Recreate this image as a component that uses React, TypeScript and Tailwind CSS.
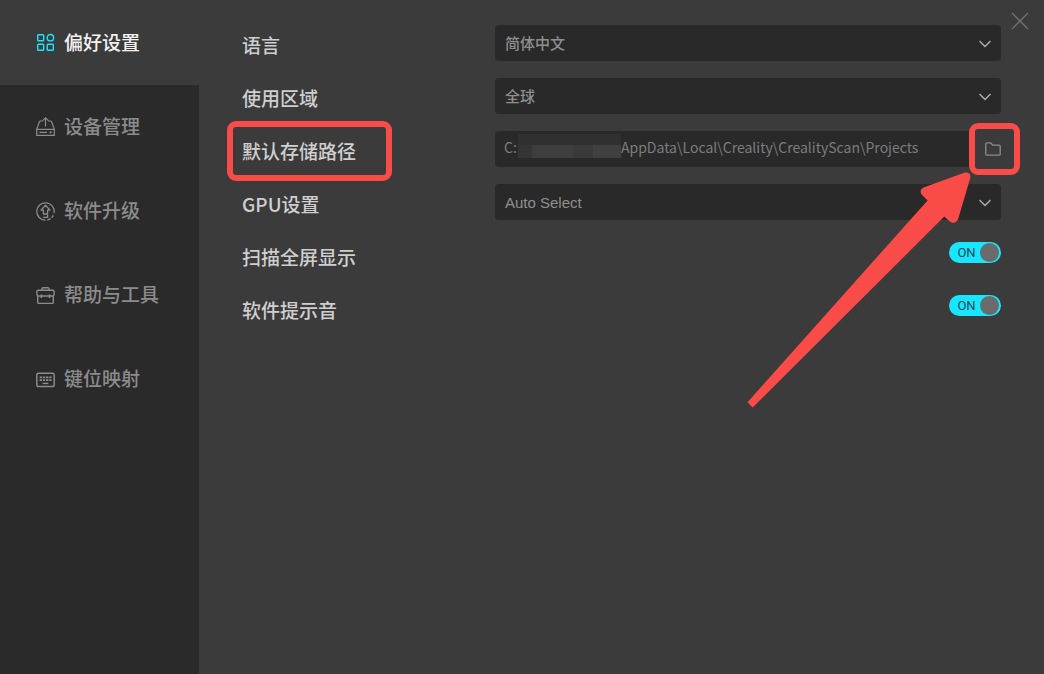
import { useState, type ReactNode } from 'react'
import { ChevronDown } from 'lucide-react'

const NAV_ITEMS = [
  { id: 'preferences', label: '偏好设置', icon: <GridIcon /> },
  { id: 'devices', label: '设备管理', icon: <DeviceIcon /> },
  { id: 'upgrade', label: '软件升级', icon: <UpgradeIcon /> },
  { id: 'help', label: '帮助与工具', icon: <ToolboxIcon /> },
  { id: 'keys', label: '键位映射', icon: <KeyboardIcon /> },
]

function GridIcon() {
  return (
    <svg width="19" height="19" viewBox="0 0 19 19" fill="none" stroke="currentColor" strokeWidth="1.4">
      <rect x="1.7" y="1.7" width="6" height="6" rx="0.8" />
      <circle cx="14.4" cy="4.7" r="3.2" />
      <rect x="1.7" y="11.3" width="6" height="6" rx="0.8" />
      <rect x="11.3" y="11.3" width="6" height="6" rx="0.8" />
    </svg>
  )
}

function DeviceIcon() {
  return (
    <svg width="19" height="19" viewBox="0 1 19 19" fill="none" stroke="currentColor" strokeWidth="1.2" overflow="visible">
      <path d="M7 4H4.6Q3.7 4 3.3 5L0.7 12.4V18.3H18.3V12.4L15.7 5Q15.3 4 14.4 4H12" />
      <path d="M0.7 12.4H18.3M9.5 9.5V1M6.6 3.6L9.5 0.8L12.4 3.6M3.5 15.4H11" />
      <circle cx="14.6" cy="15.4" r="1.1" fill="currentColor" stroke="none" />
    </svg>
  )
}

function UpgradeIcon() {
  return (
    <svg width="19" height="19" viewBox="0 0 19 19" fill="none" stroke="currentColor" strokeWidth="1.3">
      <path d="M18 11.2A8.7 8.7 0 1 0 9.5 18.2" />
      <path d="M11.4 18A8.7 8.7 0 0 0 17.2 13.4" strokeDasharray="3.5 1.4" />
      <path d="M9.5 3.2L14 8.1H11.6V12H7.4V8.1H5Z" strokeLinejoin="round" />
      <path d="M11.6 13V15.4H7.2" />
    </svg>
  )
}

function ToolboxIcon() {
  return (
    <svg width="19" height="19" viewBox="0 0 19 19" fill="none" stroke="currentColor" strokeWidth="1.4">
      <rect x="0.9" y="4.2" width="17.2" height="5.8" rx="1.4" />
      <path d="M1.7 10V16.4Q1.7 17.4 2.7 17.4H16.3Q17.3 17.4 17.3 16.4V10" />
      <path d="M6 4.2V2.8Q6 1.8 7 1.8H12Q13 1.8 13 2.8V4.2" />
      <path d="M5.4 8.4V12M13.6 8.4V12" strokeWidth="1.6" />
    </svg>
  )
}

function KeyboardIcon() {
  return (
    <svg width="19" height="19" viewBox="0 0 19 19" fill="none" stroke="currentColor">
      <rect x="0.8" y="3.2" width="17.4" height="13.4" rx="1.8" strokeWidth="1.5" />
      <path d="M3.6 7.3H15.6M3.6 10.2H15.6" strokeWidth="1.8" strokeDasharray="2.4 0.8" />
      <path d="M6.6 13.4H12.4" strokeWidth="1.4" />
    </svg>
  )
}

function FolderIcon() {
  return (
    <svg width="16" height="14" viewBox="0 0 16 14" fill="none" stroke="currentColor" strokeWidth="1.3" strokeLinejoin="round">
      <path d="M0.8 12V2Q0.8 0.8 2 0.8H5.3Q5.9 0.8 6.3 1.4L7.5 3.1H14Q15.2 3.1 15.2 4.3V12Q15.2 13.2 14 13.2H2Q0.8 13.2 0.8 12Z" />
    </svg>
  )
}

interface RowProps {
  id: string
  label: string
  marked?: boolean
  children: ReactNode
}

function Row({ id, label, marked, children }: RowProps) {
  return (
    <div className="grid grid-cols-[253px_1fr] h-9">
      <div className="flex items-center pt-1">
        <label htmlFor={id} className="relative text-[19px] leading-7 font-medium text-[#cfcfcf] font-['Noto_Sans_CJK_SC',sans-serif]">
          {label}
          {marked && (
            <span className="absolute -top-4 -bottom-4 -left-[15px] -right-9 rounded-[9px] border-6 border-[#f94b48] pointer-events-none" />
          )}
        </label>
      </div>
      {children}
    </div>
  )
}

function SelectField({ id, options }: { id: string; options: string[] }) {
  const [value, setValue] = useState(options[0])
  return (
    <div className="relative">
      <select
        id={id}
        value={value}
        onChange={e => setValue(e.target.value)}
        className="w-full h-full appearance-none rounded bg-[#292929] pl-[10px] pr-8 pt-0.5 text-[15px] font-medium text-[#8f8f8f] outline-none"
      >
        {options.map(o => (
          <option key={o}>{o}</option>
        ))}
      </select>
      <ChevronDown className="absolute right-[6px] top-[9px] size-5 text-[#a6a6a6] pointer-events-none" strokeWidth={2} />
    </div>
  )
}

function Toggle({ id }: { id: string }) {
  const [on, setOn] = useState(true)
  return (
    <div className="flex items-center justify-end pb-[5px]">
      <label className={`relative flex items-center w-[52px] h-[21px] rounded-full pl-1 pr-0.5 ${on ? 'bg-[#18e6ff]' : 'bg-[#555555] flex-row-reverse'}`}>
        <input id={id} type="checkbox" checked={on} onChange={e => setOn(e.target.checked)} className="sr-only" />
        <span className="flex-1 text-center text-[13px] leading-5 text-[#174a50] font-[Roboto,sans-serif]">{on ? 'ON' : 'OFF'}</span>
        <span className="size-[19px] rounded-full bg-[#6b6b6b]" />
      </label>
    </div>
  )
}

function App() {
  const [active, setActive] = useState('preferences')
  const [path, setPath] = useState('AppData\\Local\\Creality\\CrealityScan\\Projects')

  return (
    <div className="relative flex min-h-screen bg-[#3b3b3b] font-['Liberation_Sans','Noto_Sans_CJK_SC',sans-serif]">
      <nav className="w-[199px] shrink-0 bg-[#2a2a2a] font-['Noto_Sans_CJK_SC',sans-serif]">
        {NAV_ITEMS.map(item => (
          <button
            key={item.id}
            onClick={() => setActive(item.id)}
            className={`flex items-center gap-[9px] w-full pl-9 text-[19px] leading-7 font-medium ${
              item.id === active ? 'h-[85px] bg-[#3b3b3b] text-[#f2f2f2]' : 'h-[84px] text-[#8c8c8c]'
            }`}
          >
            <span className={item.id === active ? 'text-[#18e6ff]' : undefined}>{item.icon}</span>
            <span className="pb-0.5">{item.label}</span>
          </button>
        ))}
      </nav>

      <main className="flex-1 min-w-0 flex flex-col gap-[17px] pt-[25px] px-[43px]">
        <Row id="language" label="语言">
          <SelectField id="language" options={['简体中文', 'English']} />
        </Row>
        <Row id="region" label="使用区域">
          <SelectField id="region" options={['全球', '中国']} />
        </Row>
        <Row id="path" label="默认存储路径" marked>
          <div className="flex min-w-0">
            <div className="flex flex-1 min-w-0 h-full rounded-l bg-[#292929] pl-[9px] pt-[3px] text-[14px] leading-[26px] text-[#7d7d7d] font-['Noto_Sans_CJK_SC',sans-serif]">
              <span className="w-[14px]">C:</span>
              {/* masked user folder */}
              <span className="w-[103px] h-6 flex flex-col bg-[#303030]">
                <span className="h-[11px]" />
                <span className="flex flex-1">
                  <span className="w-[14px] bg-[#353535]" />
                  <span className="w-[41px] bg-[#3e3e3e]" />
                  <span className="w-[20px] bg-[#3a3a3a]" />
                  <span className="flex-1 bg-[#404040]" />
                </span>
              </span>
              <input
                id="path"
                value={path}
                onChange={e => setPath(e.target.value)}
                className="flex-1 min-w-0 h-[26px] bg-transparent outline-none"
              />
            </div>
            <button aria-label="选择文件夹" className="relative w-7 flex items-center justify-end text-[#8c8c8c]">
              <FolderIcon />
              <span className="absolute -top-2 -bottom-2 -left-1 -right-[19px] rounded-[9px] border-6 border-[#f94b48] pointer-events-none" />
            </button>
          </div>
        </Row>
        <Row id="gpu" label="GPU设置">
          <SelectField id="gpu" options={['Auto Select']} />
        </Row>
        <Row id="fullscreen" label="扫描全屏显示">
          <Toggle id="fullscreen" />
        </Row>
        <Row id="sound" label="软件提示音">
          <Toggle id="sound" />
        </Row>
      </main>

      <button aria-label="关闭" className="absolute top-3 right-[15px] text-[#707070]">
        <svg width="18" height="18" viewBox="0 0 18 18" fill="none" stroke="currentColor" strokeWidth="1.4">
          <path d="M1 1L17 17M17 1L1 17" />
        </svg>
      </button>

      {/* pointer towards the folder button */}
      <svg className="absolute top-[165px] right-[64px] pointer-events-none" width="240" height="250" viewBox="740 165 240 250" fill="#f94b48">
        <path d="M747.5 402.2L927.6 200.4L921.8 194.8Q918.6 190 923.5 187.4L964.8 172.6Q970.8 171.6 970.4 177.4L958 219.6Q955 225 949.8 221.6L944.3 216.6L752.6 407.6Z" />
      </svg>
    </div>
  )
}

export default App
